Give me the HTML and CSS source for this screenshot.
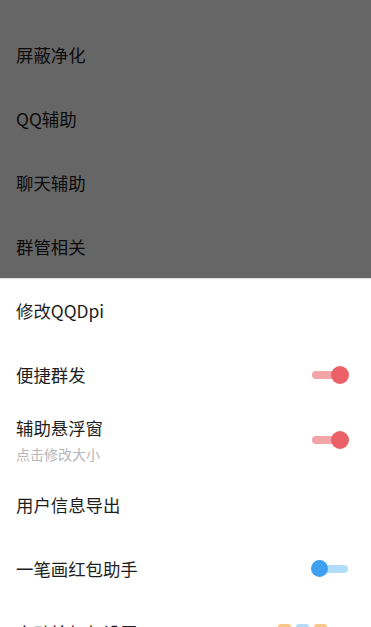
FILE: index.html
```html
<!DOCTYPE html>
<html lang="zh">
<head>
<meta charset="utf-8">
<link rel="stylesheet" href="styles.css">
</head>
<body>
<div class="screen">
  <ul class="list">
    <li class="row"><span class="title">屏蔽净化</span></li>
    <li class="row"><span class="title">QQ辅助</span></li>
    <li class="row"><span class="title">聊天辅助</span></li>
    <li class="row"><span class="title">群管相关</span></li>
    <li class="row"><span class="title">修改QQDpi</span></li>
    <li class="row"><span class="title">便捷群发</span><span class="switch on"></span></li>
    <li class="row tall">
      <div class="texts"><span class="title">辅助悬浮窗</span><span class="sub">点击修改大小</span></div>
      <span class="switch on"></span>
    </li>
    <li class="row"><span class="title">用户信息导出</span></li>
    <li class="row"><span class="title">一笔画红包助手</span><span class="switch off"></span></li>
    <li class="row"><span class="title">自动抢红包设置</span>
      <div class="swatches"><span class="sw orange"></span><span class="sw blue"></span><span class="sw orange"></span></div>
    </li>
  </ul>
  <div class="scrim"></div>
</div>
</body>
</html>
```
FILE: styles.css
```css
html, body {
  margin: 0;
  padding: 0;
  background: #fff;
}
.screen {
  position: relative;
  width: 371px;
  height: 627px;
  overflow: hidden;
  font-family: "Noto Sans CJK SC", "Noto Sans", sans-serif;
}
.list {
  list-style: none;
  margin: 0;
  padding: 23px 0 0 0;
}
.row {
  height: 64px;
  display: flex;
  align-items: center;
  justify-content: space-between;
  padding: 0 22px 0 16px;
  box-sizing: border-box;
}
.row.tall {
  height: 66px;
}
.texts {
  display: flex;
  flex-direction: column;
}
.title {
  font-size: 17.4px;
  line-height: 24px;
  color: #1e1e1e;
}
.sub {
  font-size: 14px;
  line-height: 20px;
  margin-top: 4px;
  color: #b4b6bc;
}
.switch {
  position: relative;
  width: 37px;
  height: 18px;
  flex: none;
}
.switch::before {
  content: "";
  position: absolute;
  top: 5px;
  height: 8px;
  border-radius: 4px;
}
.switch::after {
  content: "";
  position: absolute;
  top: 0;
  width: 18px;
  height: 18px;
  border-radius: 50%;
}
.switch.on::before {
  left: 0;
  width: 32px;
  background: #f2a4a7;
}
.switch.on::after {
  right: 0;
  background: #eb6167;
}
.switch.off {
  margin-right: 1px;
}
.switch.off::before {
  left: 5px;
  width: 32px;
  background: #b2ddfa;
}
.switch.off::after {
  left: 0;
  width: 17px;
  height: 17px;
  background: #3d9ff0;
}
.swatches {
  display: flex;
  gap: 5px;
  margin-right: 22px;
  align-self: flex-start;
  margin-top: 23px;
}
.sw {
  width: 13px;
  height: 13px;
  border-radius: 3px;
}
.sw.orange { background: #f9c68a; }
.sw.blue { background: #b4daf6; }
.scrim {
  position: absolute;
  left: 0;
  top: 0;
  width: 100%;
  height: 278px;
  background: rgba(0, 0, 0, 0.6);
  box-shadow: 0 1px 1px rgba(0, 0, 0, 0.12);
}
```
